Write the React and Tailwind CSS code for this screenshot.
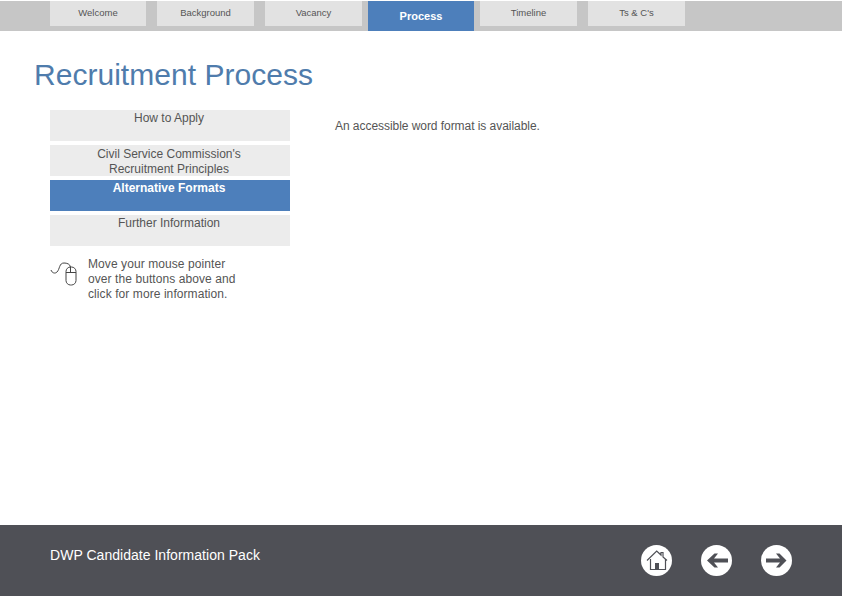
const tabs = [
  { label: 'Welcome', width: 'w-[96px]', gap: 'mr-[11px]' },
  { label: 'Background', width: 'w-[97px]', gap: 'mr-[11px]' },
  { label: 'Vacancy', width: 'w-[97px]', gap: 'mr-[6px]' },
  { label: 'Process', active: true, width: 'w-[106px]', gap: 'mr-[6px]' },
  { label: 'Timeline', width: 'w-[97px]', gap: 'mr-[11px]' },
  { label: "Ts & C's", width: 'w-[97px]', gap: '' },
];

const menu = [
  { lines: ['How to Apply'], pad: 'pt-px' },
  { lines: ["Civil Service Commission's", 'Recruitment Principles'], pad: 'pt-[2px]' },
  { lines: ['Alternative Formats'], pad: 'pt-px', active: true },
  { lines: ['Further Information'], pad: 'pt-px' },
];

const MouseIcon = () => (
  <svg width="28" height="26" viewBox="0 0 28 26" fill="none" stroke="#444" strokeWidth="1" className="shrink-0 mt-[3px]">
    <path d="M1 10c1 3 4 4 6 2 3-3 2-9 7-9 3 0 6 1 6.500 4" />
    <rect x="16" y="7" width="10" height="18" rx="4.500" fill="#fff" />
    <path d="M16 12.500h10M20.500 7v5.500" />
  </svg>
);

const HomeIcon = () => (
  <svg width="31" height="31" viewBox="0 0 31 31" className="shrink-0">
    <circle cx="15.500" cy="15.500" r="15.500" fill="#fff" />
    <path d="M6 15.500 15.700 6l4.300 4V7.500h2V12l4 3.500" fill="none" stroke="#4f5056" strokeWidth="1.200" />
    <path d="M9.500 14v10.500h15V14" fill="none" stroke="#4f5056" strokeWidth="1.200" />
    <rect x="14" y="18" width="4" height="6.500" fill="#4f5056" />
  </svg>
);

const ArrowIcon = ({ flip }) => (
  <svg width="31" height="31" viewBox="0 0 31 31" className="shrink-0">
    <circle cx="15.500" cy="15.500" r="15.500" fill="#fff" />
    <path
      d={flip ? 'M5 13.500h14L15 8.500h3.500l7 7-7 7H15l4-5H5z' : 'M27 13.500H13l4-5h-3.500l-7.500 7 7.500 7H17l-4-5h14z'}
      fill="#4f5056"
    />
  </svg>
);

export default function App() {
  return (
    <div className="w-[842px] h-[596px] flex flex-col bg-white font-['Liberation_Sans',Arial,sans-serif] overflow-hidden">
      <nav className="mt-px h-[30px] bg-[#c6c6c6] flex items-start pl-[50px] shrink-0">
        {tabs.map((tab) => (
          <div
            key={tab.label}
            className={`${tab.width} ${tab.gap} flex items-center justify-center ${
              tab.active
                ? 'h-[30px] bg-[#4d7fbb] text-white font-bold text-[11px] pt-[1px]'
                : 'h-[25px] bg-[#e2e2e2] text-[#555] text-[9.500px]'
            }`}
          >
            {tab.label}
          </div>
        ))}
      </nav>

      <h1 className="ml-[34px] mt-[27px] text-[30px] leading-[34px] tracking-[0.03px] text-[#4f7cac]">Recruitment Process</h1>

      <div className="flex-1 flex pl-[50px] pt-[18px]">
        <div className="w-[240px]">
          <div className="flex flex-col gap-[4px]">
            {menu.map((item) => (
              <div
                key={item.lines[0]}
                className={`h-[31px] ${item.pad} pr-[2px] text-center text-[12px] leading-[15px] ${
                  item.active ? 'bg-[#4d7fbb] text-white font-bold' : 'bg-[#ececec] text-[#555]'
                }`}
              >
                {item.lines.map((line) => (
                  <div key={line}>{line}</div>
                ))}
              </div>
            ))}
          </div>
          <div className="mt-[11px] flex items-start gap-[10px]">
            <MouseIcon />
            <p className="text-[12px] leading-[15px] text-[#555] tracking-[0.08px]">
              Move your mouse pointer
              <br />
              over the buttons above and
              <br />
              click for more information.
            </p>
          </div>
        </div>
        <p className="ml-[45px] mt-[9px] text-[12px] leading-[15px] text-[#555] tracking-[-0.05px]">
          An accessible word format is available.
        </p>
      </div>

      <footer className="h-[71px] bg-[#4f5056] flex items-center px-[50px] shrink-0">
        <span className="text-white text-[14px] tracking-[0.03px] flex-1 -mt-[10px]">DWP Candidate Information Pack</span>
        <div className="flex items-center gap-[29px]">
          <HomeIcon />
          <ArrowIcon />
          <ArrowIcon flip />
        </div>
      </footer>
    </div>
  );
}
